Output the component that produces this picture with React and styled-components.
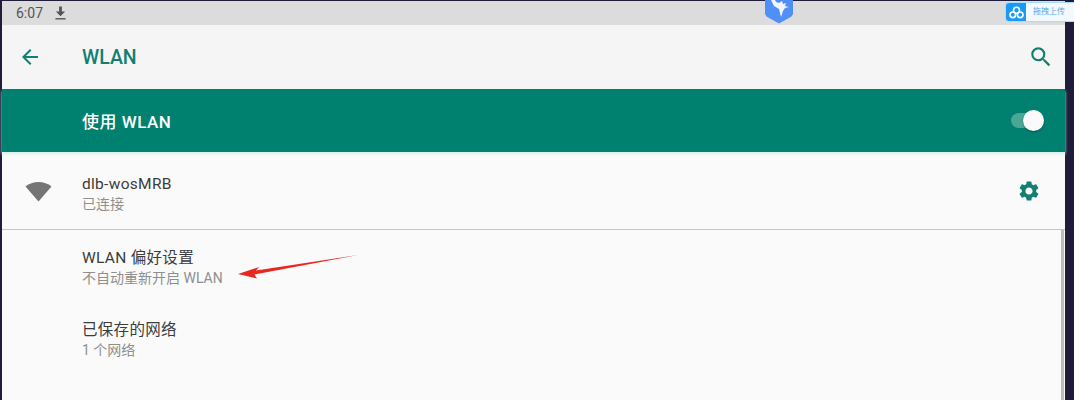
import React from 'react';
import styled, { createGlobalStyle } from 'styled-components';

const CJK = `"Roboto", "Noto Sans CJK SC", sans-serif`;

const GlobalStyle = createGlobalStyle`
  html, body {
    margin: 0;
    padding: 0;
    background: #1f1d3a;
    font-family: ${CJK};
  }
`;

// ============================================
// PAGE FRAME
// ===========================================

const Frame = styled.div`
  position: relative;
  width: 1074px;
  height: 400px;
  box-sizing: border-box;
  overflow: hidden;
  padding: 1px 9px 0 2px;
  background: #1f1d3a;
`;

const Screen = styled.div`
  height: 100%;
  display: flex;
  flex-direction: column;
  background: #fafafa;
`;

// ============================================
// STATUS BAR + TOOLBAR
// ===========================================

const StatusBar = styled.div`
  flex: 0 0 24px;
  display: flex;
  align-items: center;
  gap: 11px;
  padding-left: 14px;
  background: #dcdcdc;
  color: #555;
  font-size: 14px;
`;

const Toolbar = styled.div`
  flex: 0 0 64px;
  display: flex;
  align-items: center;
  padding: 0 11px 0 16px;
  background: #f5f5f5;
  color: #117f72;
`;

const IconSlot = styled.div`
  flex: 0 0 64px;
  display: flex;
  align-items: center;
`;

const Title = styled.div`
  flex: 1;
  font-size: 19.5px;
  font-weight: 500;
`;

// ============================================
// MASTER SWITCH
// ===========================================

const SwitchBar = styled.div`
  flex: 0 0 63px;
  display: flex;
  align-items: center;
  justify-content: space-between;
  padding: 0 21px 1px 80px;
  box-sizing: border-box;
  background: #00806f;
  color: #fff;
  font-size: 17px;
  font-weight: 500;
  letter-spacing: 0.5px;
  box-shadow: 0 2px 3px #d5efe9;
  z-index: 1;
`;

const SwitchTrack = styled.div`
  position: relative;
  width: 33px;
  height: 15px;
  border-radius: 8px;
  background: #4ba698;
`;

const SwitchThumb = styled.div`
  position: absolute;
  top: -3px;
  right: 0;
  width: 21px;
  height: 21px;
  border-radius: 50%;
  background: #fafafa;
  box-shadow: 0 1px 2px rgba(0, 0, 0, 0.35);
`;

// ============================================
// LIST
// ===========================================

const ConnectedRow = styled.div`
  flex: 0 0 77px;
  display: flex;
  align-items: center;
  padding: 0 24px 0 23px;
  border-bottom: 1px solid #c6c6c6;
`;

const RowIcon = styled.div`
  flex: 0 0 57px;
  display: flex;
  align-items: center;
`;

const RowText = styled.div`
  flex: 1;
  display: flex;
  flex-direction: column;
  gap: 1px;
  padding-top: 6px;
`;

const Primary = styled.div`
  font-size: 15.5px;
  line-height: 20px;
  color: #3c3c3c;
  letter-spacing: 0.3px;
`;

const Secondary = styled.div`
  font-size: 14px;
  line-height: 18px;
  color: #8f8f8f;
`;

const ListBody = styled.div`
  flex: 1;
  display: flex;
  border-right: 3px solid #bdbdbd;
  margin-right: 1px;
`;

const Rows = styled.div`
  flex: 1;
  display: flex;
  flex-direction: column;
  gap: 33px;
  padding: 18px 0 0 80px;
`;

const RowGroup = styled.div`
  display: flex;
  flex-direction: column;
  gap: 1px;
`;

// ============================================
// OVERLAYS
// ===========================================

const Logo = styled.svg`
  position: absolute;
  top: 0;
  left: 763px;
`;

const Arrow = styled.svg`
  position: absolute;
  top: 250px;
  left: 234px;
`;

const Upload = styled.div`
  position: absolute;
  top: 2px;
  left: 1005px;
  width: 69px;
  height: 20px;
  display: flex;
  box-sizing: border-box;
  border: 1px solid #a9dcfb;
  border-right: 0;
  border-radius: 4px 0 0 4px;
  background: #f2f9ff;
  overflow: hidden;
`;

const UploadIcon = styled.div`
  flex: 0 0 20px;
  display: flex;
  align-items: center;
  justify-content: center;
  background: #1b9af5;
`;

const UploadLabel = styled.div`
  flex: 1;
  padding-left: 7px;
  font-size: 8px;
  line-height: 18px;
  color: #5aa9e6;
`;

// ============================================
// REACT
// ===========================================

const App = () => (
  <Frame>
    <GlobalStyle />
    <Screen>
      <StatusBar>
        <span>6:07</span>
        <svg width="13" height="16" viewBox="0 0 14 16" fill="#555">
          <path d="M5.5 1h3v5.5H12L7 11.5 2 6.5h3.5z" />
          <rect x="1.5" y="13.5" width="11" height="1.5" />
        </svg>
      </StatusBar>
      <Toolbar>
        <IconSlot>
          <svg width="24" height="24" viewBox="0 0 24 24" fill="currentColor">
            <path d="M20 11H7.83l5.59-5.59L12 4l-8 8 8 8 1.41-1.41L7.83 13H20z" />
          </svg>
        </IconSlot>
        <Title>WLAN</Title>
        <svg width="26" height="26" viewBox="0 0 24 24" fill="currentColor">
          <path d="M15.5 14h-.79l-.28-.27A6.47 6.47 0 0 0 16 9.5 6.5 6.5 0 1 0 9.5 16c1.61 0 3.09-.59 4.23-1.57l.27.28v.79l5 4.99L20.49 19l-4.99-5zm-6 0C7.01 14 5 11.99 5 9.5S7.01 5 9.5 5 14 7.01 14 9.5 11.99 14 9.5 14z" />
        </svg>
      </Toolbar>
      <SwitchBar>
        <span>使用 WLAN</span>
        <SwitchTrack>
          <SwitchThumb />
        </SwitchTrack>
      </SwitchBar>
      <ConnectedRow>
        <RowIcon>
          <svg width="27" height="22" viewBox="0 0 27 22" fill="#757575">
            <path d="M0.5 6.5C4 3.5 8.5 2 13.5 2s9.500 1.500 13 4.500L13.500 21.500z" />
          </svg>
        </RowIcon>
        <RowText>
          <Primary>dlb-wosMRB</Primary>
          <Secondary>已连接</Secondary>
        </RowText>
        <svg width="24" height="24" viewBox="0 0 24 24" fill="#117f72">
          <path d="M19.14 12.94c.04-.3.06-.61.06-.94 0-.32-.02-.64-.07-.94l2.030-1.580a.49.49 0 0 0 .12-.61l-1.920-3.320a.488.488 0 0 0-.59-.22l-2.390.96c-.5-.38-1.030-.7-1.620-.94l-.36-2.540a.484.484 0 0 0-.48-.41h-3.840c-.24 0-.43.17-.47.41l-.36 2.540c-.59.24-1.130.57-1.620.94l-2.390-.96c-.22-.08-.47 0-.59.22L2.740 8.870c-.12.21-.08.47.12.61l2.030 1.580c-.05.3-.09.63-.09.94s.02.64.07.94l-2.030 1.580a.49.49 0 0 0-.12.61l1.920 3.320c.12.22.37.29.59.22l2.390-.96c.5.38 1.030.7 1.620.94l.36 2.540c.05.24.24.41.48.41h3.840c.24 0 .44-.17.47-.41l.36-2.540c.59-.24 1.130-.56 1.620-.94l2.390.96c.22.08.47 0 .59-.22l1.920-3.320c.12-.22.07-.47-.12-.61l-2.010-1.580zM12 15.600c-1.980 0-3.600-1.620-3.600-3.600s1.620-3.600 3.600-3.600 3.600 1.620 3.600 3.600-1.620 3.600-3.600 3.600z" />
        </svg>
      </ConnectedRow>
      <ListBody>
        <Rows>
          <RowGroup>
            <Primary>WLAN 偏好设置</Primary>
            <Secondary>不自动重新开启 WLAN</Secondary>
          </RowGroup>
          <RowGroup>
            <Primary>已保存的网络</Primary>
            <Secondary>1 个网络</Secondary>
          </RowGroup>
        </Rows>
      </ListBody>
    </Screen>

    <Logo width="32" height="24" viewBox="0 0 32 24">
      <path d="M2 0h28v14l-1.500 2.500L17 23a2 2 0 0 1-2 0L3.500 16.500 2 14z" fill="#4f8ff7" />
      <path d="M8 0l3 6 5 3 2 8 2-6 2-3 4-1-4-1 1-3-3 1-1-3-3 2-3-1-1-2z" fill="#f2f7ff" />
    </Logo>

    <Arrow width="126" height="34" viewBox="0 0 126 34">
      <path d="M124 5 22 20.500 25 17 4 24 23 28.500 20.500 24.500z" fill="#e8281f" />
    </Arrow>

    <Upload>
      <UploadIcon>
        <svg width="15" height="13" viewBox="0 0 15 13" fill="none" stroke="#fff" strokeWidth="1.6">
          <circle cx="7.500" cy="4.200" r="3" />
          <circle cx="3.800" cy="8.800" r="2.800" />
          <circle cx="11.200" cy="8.800" r="2.800" />
        </svg>
      </UploadIcon>
      <UploadLabel>拖拽上传</UploadLabel>
    </Upload>
  </Frame>
);

export default App;
